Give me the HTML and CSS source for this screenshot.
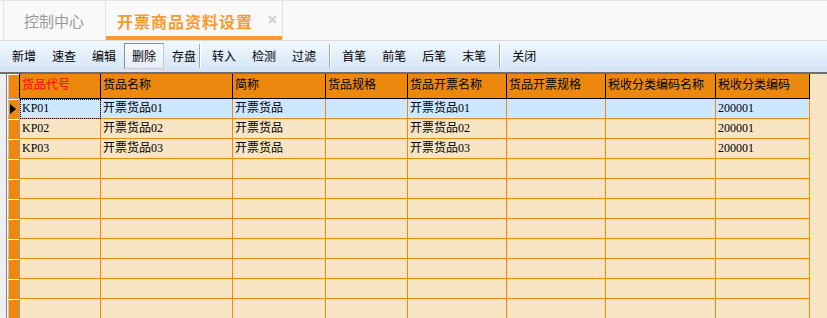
FILE: index.html
```html
<!DOCTYPE html>
<html lang="zh-CN">
<head>
  <meta charset="UTF-8" />
  <title>开票商品资料设置</title>
  <link rel="stylesheet" href="styles.css">
</head>
<body>
  <!-- Tabs -->
  <div class="tabbar">
    <div class="tab">控制中心</div>
    <div class="tab tab-active">
      <span>开票商品资料设置</span>
      <svg class="tab-close" viewBox="0 0 9 9" width="9" height="9">
        <path d="M1 1 L8 8 M8 1 L1 8" />
      </svg>
    </div>
  </div>

  <!-- Toolbar -->
  <div class="toolbar">
    <span class="tb-btn">新增</span>
    <span class="tb-btn">速查</span>
    <span class="tb-btn">编辑</span>
    <span class="tb-btn tb-btn-down">删除</span>
    <span class="tb-btn">存盘</span>
    <span class="tb-sep tb-sep-near"></span>
    <span class="tb-btn">转入</span>
    <span class="tb-btn">检测</span>
    <span class="tb-btn">过滤</span>
    <span class="tb-sep"></span>
    <span class="tb-btn">首笔</span>
    <span class="tb-btn">前笔</span>
    <span class="tb-btn">后笔</span>
    <span class="tb-btn">末笔</span>
    <span class="tb-sep"></span>
    <span class="tb-btn">关闭</span>
  </div>

  <!-- Data grid -->
  <div class="grid-area">
    <div class="gutter"></div>
    <div class="datagrid">
      <div class="gr gr-head">
        <div class="ind"></div>
        <div class="hc hc-key">货品代号</div>
        <div class="hc">货品名称</div>
        <div class="hc">简称</div>
        <div class="hc">货品规格</div>
        <div class="hc">货品开票名称</div>
        <div class="hc">货品开票规格</div>
        <div class="hc">税收分类编码名称</div>
        <div class="hc">税收分类编码</div>
      </div>

      <div class="gr gr-current">
        <div class="ind"><span class="arrow"></span></div>
        <div class="c c-focus">KP01</div>
        <div class="c">开票货品01</div>
        <div class="c">开票货品</div>
        <div class="c"></div>
        <div class="c">开票货品01</div>
        <div class="c"></div>
        <div class="c"></div>
        <div class="c">200001</div>
      </div>
      <div class="gr">
        <div class="ind"></div>
        <div class="c">KP02</div>
        <div class="c">开票货品02</div>
        <div class="c">开票货品</div>
        <div class="c"></div>
        <div class="c">开票货品02</div>
        <div class="c"></div>
        <div class="c"></div>
        <div class="c">200001</div>
      </div>
      <div class="gr">
        <div class="ind"></div>
        <div class="c">KP03</div>
        <div class="c">开票货品03</div>
        <div class="c">开票货品</div>
        <div class="c"></div>
        <div class="c">开票货品03</div>
        <div class="c"></div>
        <div class="c"></div>
        <div class="c">200001</div>
      </div>

      <!-- empty rows -->
      <div class="gr"><div class="ind"></div><div class="c"></div><div class="c"></div><div class="c"></div><div class="c"></div><div class="c"></div><div class="c"></div><div class="c"></div><div class="c"></div></div>
      <div class="gr"><div class="ind"></div><div class="c"></div><div class="c"></div><div class="c"></div><div class="c"></div><div class="c"></div><div class="c"></div><div class="c"></div><div class="c"></div></div>
      <div class="gr"><div class="ind"></div><div class="c"></div><div class="c"></div><div class="c"></div><div class="c"></div><div class="c"></div><div class="c"></div><div class="c"></div><div class="c"></div></div>
      <div class="gr"><div class="ind"></div><div class="c"></div><div class="c"></div><div class="c"></div><div class="c"></div><div class="c"></div><div class="c"></div><div class="c"></div><div class="c"></div></div>
      <div class="gr"><div class="ind"></div><div class="c"></div><div class="c"></div><div class="c"></div><div class="c"></div><div class="c"></div><div class="c"></div><div class="c"></div><div class="c"></div></div>
      <div class="gr"><div class="ind"></div><div class="c"></div><div class="c"></div><div class="c"></div><div class="c"></div><div class="c"></div><div class="c"></div><div class="c"></div><div class="c"></div></div>
      <div class="gr"><div class="ind"></div><div class="c"></div><div class="c"></div><div class="c"></div><div class="c"></div><div class="c"></div><div class="c"></div><div class="c"></div><div class="c"></div></div>
      <div class="gr"><div class="ind"></div><div class="c"></div><div class="c"></div><div class="c"></div><div class="c"></div><div class="c"></div><div class="c"></div><div class="c"></div><div class="c"></div></div>
    </div>
  </div>
</body>
</html>
```

FILE: styles.css
```css
html, body {
  margin: 0;
  height: 100%;
  overflow: hidden;
  background: #f7e4c3;
  font-family: "Noto Sans CJK SC", sans-serif;
}

/* ---- tabs ---- */
.tabbar {
  display: flex;
  height: 39px;
  padding-left: 3px;
  background: #f9f9f9;
  border-top: 1px solid #e6e6e6;
  border-bottom: 1px solid #d9d9d9;
}

.tab {
  display: flex;
  align-items: center;
  box-sizing: border-box;
  width: 103px;
  padding-left: 20px;
  border-left: 1px solid #e2e2e2;
  border-right: 1px solid #e2e2e2;
  font-size: 15px;
  color: #999;
}

.tab-active {
  width: 177px;
  padding-left: 11px;
  border-left: none;
  font-size: 16px;
  font-weight: bold;
  letter-spacing: 1px;
  color: #f89b2f;
  box-shadow: inset 0 -4px 0 #fb9b2c;
}

.tab-close {
  margin-left: 15px;
  margin-top: -2px;
  fill: none;
  stroke: #cfcfcf;
  stroke-width: 2;
}

/* ---- toolbar ---- */
.toolbar {
  display: flex;
  align-items: center;
  height: 30px;
  padding-left: 4px;
  background: linear-gradient(#f1f8fe, #d4e4f6);
  border-bottom: 1px solid #e4e4e4;
}

.tb-btn {
  height: 24px;
  padding: 0 7px;
  border: 1px solid transparent;
  font-size: 12px;
  line-height: 24px;
  color: #000;
}

.tb-btn-down {
  border-color: #8f8f8f #c8c8c8 #c8c8c8 #8f8f8f;
  background: linear-gradient(#f7fbff, #e6eef8);
}

.tb-sep {
  width: 1px;
  height: 24px;
  margin: 0 4px 0 5px;
  background: #a8a8a8;
  box-shadow: 1px 0 0 #fff;
}

.tb-sep-near {
  margin-left: -5px;
}

/* ---- grid ---- */
.grid-area {
  display: flex;
  border-top: 2px solid #6e6e6e;
}

.gutter {
  width: 6px;
  background: #efefef;
}

.datagrid {
  flex: 1;
  padding-left: 1px;
  border-left: 1px solid #808080;
  background: linear-gradient(to right, #fff 1px, #f7e4c3 1px);
}

.gr {
  display: grid;
  grid-template-columns: 12px 81px 132px 93px 82px 99px 99px 110px 94px;
  height: 20px;
}

.gr > div {
  box-sizing: border-box;
  overflow: hidden;
  white-space: nowrap;
}

.ind {
  position: relative;
  background: #ee890d;
  border-right: 1px solid #9c9c9c;
  border-bottom: 1px solid #f08a0c;
  box-shadow: inset 0 1px 0 #fff, inset 1px 0 0 #c4c4c4;
}

.arrow {
  position: absolute;
  left: 2px;
  top: 5px;
  border-left: 6px solid #000;
  border-top: 5px solid transparent;
  border-bottom: 5px solid transparent;
}

.c {
  padding-left: 2px;
  border-right: 1px solid #f08a0c;
  border-bottom: 1px solid #f08a0c;
  font-family: "Liberation Serif", "Noto Sans CJK SC", serif;
  font-size: 12px;
  line-height: 19px;
  color: #000;
}

.gr-current .c {
  background: #cce8ff;
}

.c-focus {
  outline: 1px dotted #000;
  outline-offset: -1px;
}

.gr-head {
  height: 25px;
}

.gr-head .ind {
  border-right-color: #000;
  border-bottom: 1px solid #9c9c9c;
}

.hc {
  padding: 2px 0 0 2px;
  background: #ec880d;
  border-right: 1px solid #000;
  border-bottom: 1px solid #000;
  font-size: 12px;
  line-height: 16px;
  color: #000;
}

.hc-key {
  color: #f00;
}
```
